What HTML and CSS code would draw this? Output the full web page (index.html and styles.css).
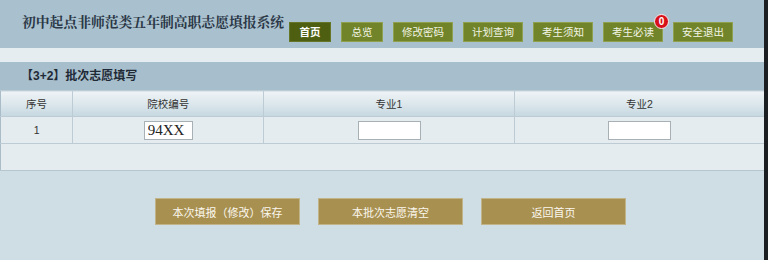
FILE: index.html
```html
<!DOCTYPE html>
<html lang="zh-CN">
<head>
  <meta charset="UTF-8" />
  <title>初中起点非师范类五年制高职志愿填报系统</title>
  <link rel="stylesheet" href="styles.css">
</head>
<body>
  <div class="page">
    <div class="header">
      <h1 class="title">初中起点非师范类五年制高职志愿填报系统</h1>
      <div class="nav">
        <a class="nav-btn active short">首页</a>
        <a class="nav-btn short">总览</a>
        <a class="nav-btn">修改密码</a>
        <a class="nav-btn">计划查询</a>
        <a class="nav-btn">考生须知</a>
        <a class="nav-btn">考生必读<span class="badge">0</span></a>
        <a class="nav-btn">安全退出</a>
      </div>
    </div>

    <div class="gap-strip"></div>

    <div class="section-title">【3+2】批次志愿填写</div>

    <table class="grid">
      <thead>
        <tr>
          <th class="c-no">序号</th>
          <th class="c-school">院校编号</th>
          <th class="c-major">专业1</th>
          <th class="c-major">专业2</th>
        </tr>
      </thead>
      <tbody>
        <tr class="data-row">
          <td>1</td>
          <td><input class="code-input" type="text" value="94XX" /></td>
          <td><input class="major-input" type="text" /></td>
          <td><input class="major-input" type="text" /></td>
        </tr>
        <tr class="empty-row">
          <td colspan="4"></td>
        </tr>
      </tbody>
    </table>

    <div class="actions">
      <button class="act-btn">本次填报（修改）保存</button>
      <button class="act-btn">本批次志愿清空</button>
      <button class="act-btn">返回首页</button>
    </div>
  </div>
</body>
</html>
```

FILE: styles.css
```css
body { margin: 0; padding: 0; background: #1c1f22; font-family: "Liberation Sans", "Noto Sans CJK SC", sans-serif; color: #333; }
.page { width: 764px; height: 260px; background: #cfdde4; overflow: hidden; }

.header { height: 48px; background: #a9c1ce; display: flex; align-items: flex-start; }
.title {
  width: 267px; margin: 14px 0 0 22px; font-family: "Liberation Serif", "Noto Serif CJK SC", "Noto Sans CJK SC", serif;
  font-size: 13.8px; font-weight: bold; color: #2b3847; white-space: nowrap; line-height: 18px; overflow: hidden;
}
.nav { display: flex; gap: 10px; margin: 22px 0 0 0; }
.nav-btn {
  position: relative; display: block; width: 58px; height: 18px; line-height: 18px; text-align: center;
  background: #718429; border: 1px solid #8fa04e; color: #f2f4e6; font-size: 10.5px;
}
.nav-btn.short { width: 40px; }
.nav-btn.active { background: #4e5f12; border-color: #667628; color: #fff; font-weight: bold; }
.badge {
  position: absolute; right: -7px; top: -9px; width: 13px; height: 13px; border-radius: 50%;
  background: #d8101a; border: 1px solid #f1f1f1; color: #fff; font-size: 10px; font-weight: bold;
  line-height: 13px; text-align: center;
}

.gap-strip { height: 14px; background: #e6edf1; }
.section-title {
  height: 28px; line-height: 28px; background: #a7bfcc; padding-left: 21px;
  font-size: 12px; font-weight: bold; color: #1f2a36;
}

.grid { width: 764px; border-collapse: collapse; table-layout: fixed; }
.grid th, .grid td { border: 1px solid #bccbd4; text-align: center; font-size: 10.5px; padding: 0; }
.grid th:first-child, .grid td:first-child { border-left-color: #a9bcc7; }
.grid th:last-child, .grid td:last-child { border-right: none; }
.grid th {
  height: 25px; font-weight: normal; color: #333;
  background: linear-gradient(#eef3f6, #dce7ec 50%, #c6d7e0);
}
.c-no { width: 71px; }
.c-school { width: 190px; }
.c-major { width: 249px; }
.data-row td { height: 26px; background: #e4ecf0; }
.empty-row td { height: 26px; background: #e4ecf0; border-bottom: 1px solid #b5c6cf; }

.code-input, .major-input {
  box-sizing: border-box; height: 19px; border: 1px solid #a7b0b5; background: #fff; padding: 0 0 0 3px;
  vertical-align: middle; margin: 0;
}
.code-input { width: 49px; font-family: "Liberation Serif", serif; font-size: 15px; color: #222; }
.major-input { width: 63px; }

.actions { display: flex; gap: 18px; padding: 27px 0 0 155px; }
.act-btn {
  width: 145px; height: 27px; background: #a89051; border: 1px solid #c2b48a; color: #fbf8ef;
  font-family: "Liberation Sans", "Noto Sans CJK SC", sans-serif; font-size: 11px; padding: 0;
}
```
